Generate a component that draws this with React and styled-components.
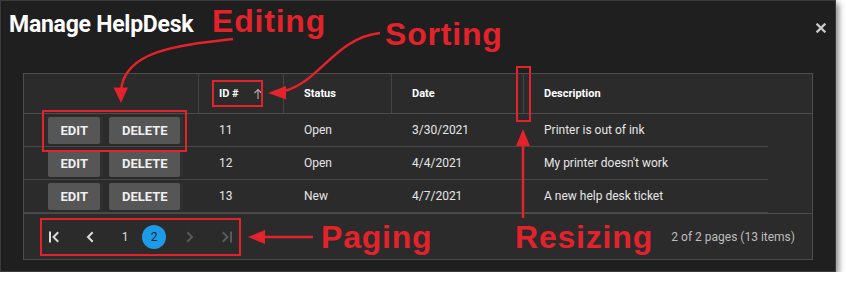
import React from 'react';
import styled, { createGlobalStyle } from 'styled-components';

const Global = createGlobalStyle`
  html, body { margin: 0; padding: 0; background: #ffffff; }
  body { font-family: Roboto, "Liberation Sans", Arial, sans-serif; }
`;

const RED = '#e3222b';

const Dialog = styled.div`
  position: relative;
  width: 836px;
  height: 272px;
  box-sizing: border-box;
  background: #1f1f1f;
  border: 1px solid #3b3b3b;
  box-shadow: 3px 3px 6px rgba(0, 0, 0, 0.45);
  display: flex;
  flex-direction: column;
`;

const TitleBar = styled.div`
  height: 72px;
  box-sizing: border-box;
  padding: 10px 9px 0 8px;
  display: flex;
  justify-content: space-between;
  align-items: flex-start;
`;

const Title = styled.h1`
  margin: 0;
  font-size: 23px;
  line-height: 28px;
  font-weight: 700;
  letter-spacing: -0.25px;
  color: #ffffff;
`;

const Close = styled.button`
  margin-top: 12px;
  width: 10px;
  height: 10px;
  padding: 0;
  border: none;
  background: none;
  display: flex;
`;

const Grid = styled.div`
  margin-left: 22px;
  width: 790px;
  box-sizing: border-box;
  border: 1px solid #4d4d4d;
  background: #2b2b2b;
`;

const COLS = '174px 85px 108px 132px 245px';

const HeaderRow = styled.div`
  display: grid;
  grid-template-columns: ${COLS} 1fr;
  height: 40px;
  box-sizing: border-box;
  border-bottom: 1px solid #4d4d4d;
`;

const HeaderCell = styled.div`
  display: flex;
  align-items: center;
  gap: 14px;
  padding-left: 20px;
  border-left: ${(p) => (p.$sep ? '1px solid #444' : 'none')};
  font-size: 11px;
  font-weight: 700;
  color: #ffffff;
`;

const Row = styled.div`
  display: grid;
  grid-template-columns: ${COLS};
  width: 744px;
  height: 33px;
  box-sizing: border-box;
  border-bottom: 1px solid #474747;
  &:last-of-type { border-bottom-color: transparent; }
`;

const Cell = styled.div`
  display: flex;
  align-items: center;
  padding-left: ${(p) => (p.$cmd ? '24px' : '21px')};
  gap: 9px;
  font-size: 12px;
  color: #e6e6e6;
  white-space: nowrap;
`;

const ActionButton = styled.button`
  height: 27px;
  padding: 0 12.5px;
  border: none;
  border-radius: 2px;
  background: #565656;
  color: #f0f0f0;
  font-family: Roboto, "Liberation Sans", sans-serif;
  font-size: 13px;
  font-weight: 700;
  text-transform: uppercase;
  box-shadow: 3px 0 0 #303030;
`;

const Pager = styled.div`
  height: 46px;
  box-sizing: border-box;
  border-top: 1px solid #4d4d4d;
  display: flex;
  align-items: center;
  justify-content: space-between;
  padding: 0 17px 0 12px;
`;

const PagerNav = styled.div`
  display: flex;
  align-items: center;
`;

const PagerItem = styled.div`
  width: ${(p) => p.$w}px;
  height: 24px;
  display: flex;
  align-items: center;
  justify-content: center;
  font-size: 12px;
  color: ${(p) => (p.$disabled ? '#5a5a5a' : '#dddddd')};
`;

const CurrentPage = styled.div`
  width: 24px;
  height: 24px;
  border-radius: 50%;
  background: #1e9be6;
  color: #10283f;
  font-size: 12px;
  display: flex;
  align-items: center;
  justify-content: center;
`;

const PagerInfo = styled.div`
  font-size: 12px;
  color: #bdbdbd;
`;

const Overlay = styled.svg`
  position: absolute;
  left: -1px;
  top: -1px;
  pointer-events: none;
`;

const Callout = styled.div`
  position: absolute;
  left: ${(p) => p.$x}px;
  top: ${(p) => p.$y}px;
  font-family: "Liberation Sans", Arial, sans-serif;
  font-size: 32px;
  line-height: 32px;
  font-weight: 700;
  letter-spacing: 0.8px;
  color: ${RED};
  white-space: nowrap;
`;

const rows = [
  { id: 11, status: 'Open', date: '3/30/2021', desc: 'Printer is out of ink' },
  { id: 12, status: 'Open', date: '4/4/2021', desc: "My printer doesn't work" },
  { id: 13, status: 'New', date: '4/7/2021', desc: 'A new help desk ticket' },
];

const Chevron = ({ dir = 'left', bar = false, color }) => (
  <svg width="12" height="12" viewBox="0 0 12 12" fill="none" stroke={color} strokeWidth="2" strokeLinecap="square">
    {dir === 'left' ? (
      <>
        {bar && <path d="M2 1.5V10.5" />}
        <path d={bar ? 'M9.5 2L5.5 6L9.5 10' : 'M8 2L4 6L8 10'} />
      </>
    ) : (
      <>
        {bar && <path d="M10 1.5V10.5" />}
        <path d={bar ? 'M2.5 2L6.5 6L2.5 10' : 'M4 2L8 6L4 10'} />
      </>
    )}
  </svg>
);

export default function App() {
  return (
    <>
      <Global />
      <Dialog>
        <TitleBar>
          <Title>Manage HelpDesk</Title>
          <Close aria-label="close">
            <svg width="10" height="10" viewBox="0 0 10 10" stroke="#c8c8c8" strokeWidth="2.4" strokeLinecap="square">
              <path d="M1.5 1.5L8.5 8.5M8.5 1.5L1.5 8.5" />
            </svg>
          </Close>
        </TitleBar>
        <Grid>
          <HeaderRow>
            <HeaderCell />
            <HeaderCell $sep>
              ID #
              <svg width="10" height="12" viewBox="0 0 10 12" fill="none" stroke="#a8a8a8" strokeWidth="1.2">
                <path d="M5 11V1.5M1.5 5L5 1.5L8.5 5" />
              </svg>
            </HeaderCell>
            <HeaderCell $sep>Status</HeaderCell>
            <HeaderCell $sep>Date</HeaderCell>
            <HeaderCell $sep>Description</HeaderCell>
            <HeaderCell />
          </HeaderRow>
          {rows.map((r) => (
            <Row key={r.id}>
              <Cell $cmd>
                <ActionButton>Edit</ActionButton>
                <ActionButton>Delete</ActionButton>
              </Cell>
              <Cell>{r.id}</Cell>
              <Cell>{r.status}</Cell>
              <Cell>{r.date}</Cell>
              <Cell>{r.desc}</Cell>
            </Row>
          ))}
          <Pager>
            <PagerNav>
              <PagerItem $w={36}><Chevron dir="left" bar color="#dddddd" /></PagerItem>
              <PagerItem $w={36}><Chevron dir="left" color="#dddddd" /></PagerItem>
              <PagerItem $w={34}>1</PagerItem>
              <CurrentPage>2</CurrentPage>
              <PagerItem $w={48} $disabled><Chevron dir="right" color="#5a5a5a" /></PagerItem>
              <PagerItem $w={26} $disabled><Chevron dir="right" bar color="#5a5a5a" /></PagerItem>
            </PagerNav>
            <PagerInfo>2 of 2 pages (13 items)</PagerInfo>
          </Pager>
        </Grid>

        <Overlay width="836" height="272" viewBox="0 0 836 272" fill="none">
          <g stroke={RED} strokeWidth="2">
            <rect x="213" y="81" width="49" height="25" />
            <rect x="43" y="111" width="143" height="40" />
            <rect x="41" y="219" width="199" height="36" />
            <rect x="517" y="67" width="13" height="54" />
          </g>
          <g stroke={RED} strokeWidth="2.5" fill="none">
            <path d="M233 39 C 180 45, 125 50, 121 90" />
            <path d="M380 33 C 335 38, 320 82, 284 91" />
            <path d="M313 237 H 262" />
            <path d="M523 218 V 143" />
          </g>
          <g fill={RED}>
            <path d="M121 103 L113.5 87.5 L128 87.5 Z" />
            <path d="M268 93 L286 86 L286 99.5 Z" />
            <path d="M248 237 L265 230 L265 244 Z" />
            <path d="M523 129 L516 146 L530 146 Z" />
          </g>
        </Overlay>
        <Callout $x={211} $y={4}>Editing</Callout>
        <Callout $x={384} $y={17}>Sorting</Callout>
        <Callout $x={320} $y={220}>Paging</Callout>
        <Callout $x={514} $y={220}>Resizing</Callout>
      </Dialog>
    </>
  );
}
